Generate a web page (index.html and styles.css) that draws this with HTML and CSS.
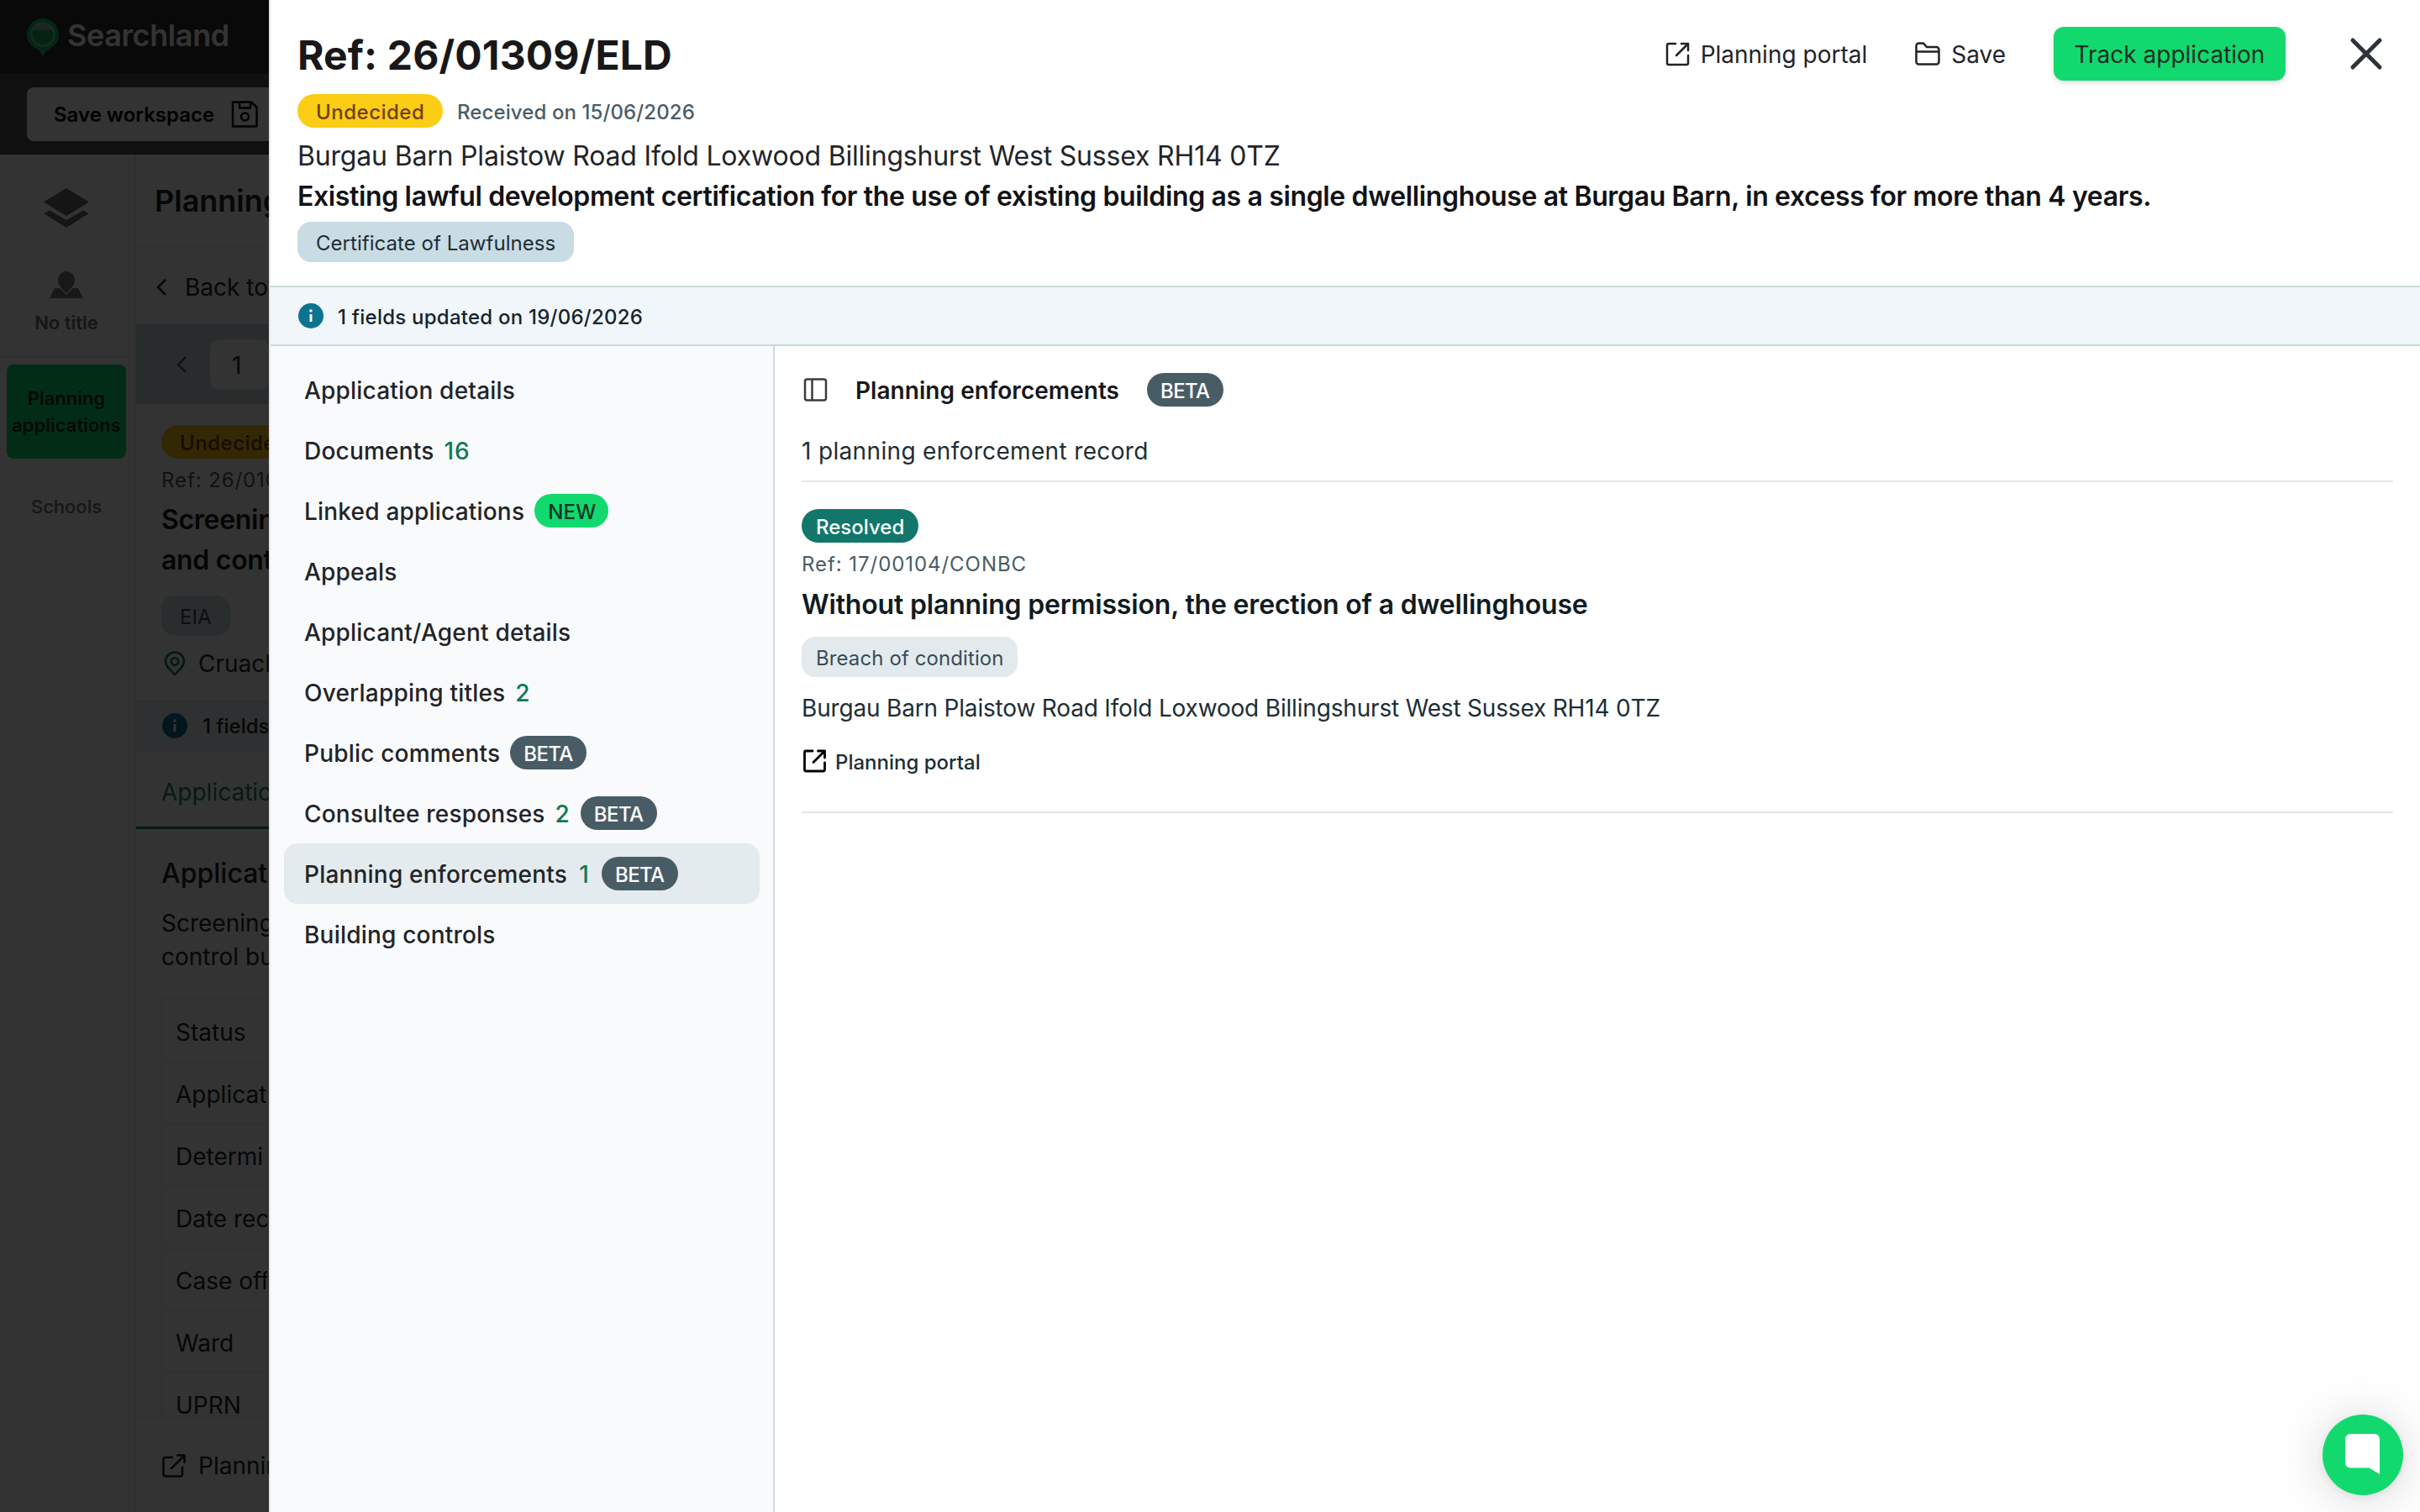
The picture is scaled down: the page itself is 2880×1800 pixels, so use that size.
FILE: index.html
```html
<!DOCTYPE html>
<html lang="en">
<head>
    <meta charset="UTF-8">
    <meta name="viewport" content="width=device-width, initial-scale=1.0">
    <title>Searchland - Planning applications</title>
    <link rel="stylesheet" href="styles.css">
</head>
<body>
    <div class="app">
        <header class="topbar">
            <svg class="logo" width="38" height="45" viewBox="0 0 38 45">
                <path d="M19 0a19 19 0 0 1 19 19c0 9-6 15-14 18.500L19 45l-5-7.500C6 34 0 28 0 19A19 19 0 0 1 19 0z" fill="#12c065"/>
                <circle cx="19" cy="19" r="13.500" fill="#12b25f"/>
                <path d="M6.500 14a13.500 13.500 0 0 1 25 0z" fill="#9ab5a8"/>
                <circle cx="19" cy="19" r="13.500" fill="none" stroke="#8fd8b0" stroke-width="2"/>
            </svg>
            <span class="brand">Searchland</span>
        </header>
        <div class="toolbar">
            <button class="save-workspace">
                Save workspace
                <svg width="32" height="32" viewBox="0 0 32 32" fill="none" stroke="#000" stroke-width="2.500" stroke-linejoin="round">
                    <path d="M2 1.500h22l6.500 6v23H2z"/>
                    <path d="M10 1.500v7h13v-7"/>
                    <circle cx="16.500" cy="19" r="4.500"/>
                </svg>
            </button>
        </div>

        <div class="workspace">
            <nav class="rail">
                <svg class="rail-layers" width="54" height="48" viewBox="0 0 54 48" fill="#6b6b6b">
                    <path d="M27 0l27 16.500L27 33 0 16.500z"/>
                    <path d="M0 30l7-3.500L27 38l20-11.500 7 3.500-27 17z"/>
                </svg>
                <svg class="rail-title" width="40" height="33" viewBox="0 0 40 33" fill="#777">
                    <path d="M20 26c-5-5-10-9-10-16a10 10 0 0 1 20 0c0 7-5 11-10 16z"/>
                    <path d="M6 20h6l8 8 8-8h6l6 12H0z"/>
                </svg>
                <span class="rail-label">No title</span>
                <div class="rail-active">Planning applications</div>
                <span class="rail-label schools">Schools</span>
            </nav>

            <section class="column">
                <h2 class="column-title">Planning</h2>
                <div class="back">
                    <svg width="12" height="20" viewBox="0 0 12 20" fill="none" stroke="#222" stroke-width="2.500"><path d="M11 1L2 10l9 9"/></svg>
                    Back to
                </div>
                <div class="pager">
                    <svg width="12" height="20" viewBox="0 0 12 20" fill="none" stroke="#4a5c66" stroke-width="2.500"><path d="M11 1L2 10l9 9"/></svg>
                    <div class="pager-input">1</div>
                </div>
                <div class="summary">
                    <span class="badge badge-undecided">Undecided</span>
                    <p class="summary-ref">Ref: 26/010</p>
                    <p class="summary-title">Screenin<br>and cont</p>
                    <span class="chip chip-light">EIA</span>
                    <p class="summary-address">
                        <svg width="26" height="30" viewBox="0 0 26 30" fill="none" stroke="#12776a" stroke-width="2.600">
                            <path d="M13 28C7 22 2 18 2 12.500a11 11 0 0 1 22 0C24 18 19 22 13 28z"/>
                            <circle cx="13" cy="12.500" r="4.200"/>
                        </svg>
                        Cruach
                    </p>
                </div>
                <div class="column-notice">
                    <svg class="info" width="30" height="30" viewBox="0 0 30 30">
                        <circle cx="15" cy="15" r="15" fill="#0b7491"/>
                        <path d="M15 13v9" stroke="#fff" stroke-width="3"/>
                        <circle cx="15" cy="9" r="1.800" fill="#fff"/>
                    </svg>
                    1 fields
                </div>
                <div class="tab">Applicatio</div>
                <h3 class="details-title">Applicat</h3>
                <p class="details-text">Screening<br>control bu</p>
                <div class="details-table">
                    <div>Status</div>
                    <div>Applicat</div>
                    <div>Determi</div>
                    <div>Date rec</div>
                    <div>Case off</div>
                    <div>Ward</div>
                    <div>UPRN</div>
                </div>
                <div class="column-footer">
                    <svg width="28" height="28" viewBox="0 0 28 28" fill="none" stroke="#222" stroke-width="2.500" stroke-linecap="round" stroke-linejoin="round">
                        <path d="M12 4H4a2.500 2.500 0 0 0-2.500 2.500V24A2.500 2.500 0 0 0 4 26.500h17.500A2.500 2.500 0 0 0 24 24v-8"/>
                        <path d="M11 17L26.500 1.500M18 1.500h8.500V10"/>
                    </svg>
                    Plannin
                </div>
            </section>
        </div>
    </div>

    <div class="overlay"></div>

    <main class="drawer">
        <header class="drawer-header">
            <div class="drawer-info">
                <h1 class="drawer-title">Ref: 26/01309/ELD</h1>
                <div class="status-row">
                    <span class="badge badge-undecided">Undecided</span>
                    <span class="received">Received on 15/06/2026</span>
                </div>
                <p class="address">Burgau Barn Plaistow Road Ifold Loxwood Billingshurst West Sussex RH14 0TZ</p>
                <p class="proposal">Existing lawful development certification for the use of existing building as a single dwellinghouse at Burgau Barn, in excess for more than 4 years.</p>
                <span class="chip chip-blue">Certificate of Lawfulness</span>
            </div>
            <div class="drawer-actions">
                <a class="action portal">
                    <svg width="30" height="30" viewBox="0 0 30 30" fill="none" stroke="#222" stroke-width="2.500" stroke-linecap="round" stroke-linejoin="round">
                        <path d="M12 3H4a2 2 0 0 0-2 2v21a2 2 0 0 0 2 2h21a2 2 0 0 0 2-2v-9"/>
                        <path d="M13 17L27 3M19 3h8v8"/>
                    </svg>
                    <span>Planning portal</span>
                </a>
                <a class="action save">
                    <svg width="30" height="28" viewBox="0 0 30 28" fill="none" stroke="#222" stroke-width="2.500" stroke-linejoin="round">
                        <path d="M1.500 23.500v-19A3 3 0 0 1 4.500 1.500h5.500l4 4.500h11.500a3 3 0 0 1 3 3v14.500a3 3 0 0 1-3 3h-21a3 3 0 0 1-3-3z"/>
                        <path d="M1.500 11.500h27"/>
                    </svg>
                    <span>Save</span>
                </a>
                <button class="track"><span>Track application</span></button>
                <svg class="close" width="40" height="40" viewBox="0 0 40 40" stroke="#2d333b" stroke-width="5" stroke-linecap="round">
                    <path d="M4 4l32 32M36 4L4 36"/>
                </svg>
            </div>
        </header>

        <div class="notice">
            <svg class="info" width="30" height="30" viewBox="0 0 30 30">
                <circle cx="15" cy="15" r="15" fill="#0b7491"/>
                <path d="M15 13v9" stroke="#fff" stroke-width="3"/>
                <circle cx="15" cy="9" r="1.800" fill="#fff"/>
            </svg>
            <span>1 fields updated on 19/06/2026</span>
        </div>

        <div class="drawer-body">
            <nav class="menu">
                <a class="menu-item"><span>Application details</span></a>
                <a class="menu-item"><span>Documents</span><span class="count">16</span></a>
                <a class="menu-item"><span>Linked applications</span><b class="badge badge-new">NEW</b></a>
                <a class="menu-item"><span>Appeals</span></a>
                <a class="menu-item"><span>Applicant/Agent details</span></a>
                <a class="menu-item"><span>Overlapping titles</span><span class="count">2</span></a>
                <a class="menu-item"><span>Public comments</span><b class="badge badge-beta">BETA</b></a>
                <a class="menu-item"><span>Consultee responses</span><span class="count">2</span><b class="badge badge-beta">BETA</b></a>
                <a class="menu-item active"><span>Planning enforcements</span><span class="count">1</span><b class="badge badge-beta">BETA</b></a>
                <a class="menu-item"><span>Building controls</span></a>
            </nav>

            <section class="content">
                <div class="content-header">
                    <svg width="32" height="32" viewBox="0 0 32 32" fill="none" stroke="#3c3c40" stroke-width="2.500">
                        <rect x="4" y="3.500" width="25" height="25" rx="2.500"/>
                        <path d="M12.500 3.500v25"/>
                    </svg>
                    <h2>Planning enforcements</h2>
                    <b class="badge badge-beta">BETA</b>
                </div>
                <p class="record-count">1 planning enforcement record</p>
                <article class="record">
                    <span class="badge badge-resolved">Resolved</span>
                    <p class="record-ref">Ref: 17/00104/CONBC</p>
                    <h3 class="record-title">Without planning permission, the erection of a dwellinghouse</h3>
                    <span class="chip chip-light">Breach of condition</span>
                    <p class="record-address">Burgau Barn Plaistow Road Ifold Loxwood Billingshurst West Sussex RH14 0TZ</p>
                    <a class="record-link">
                        <svg width="32" height="32" viewBox="0 0 32 32" fill="none" stroke="#000" stroke-width="2.800" stroke-linecap="round" stroke-linejoin="round">
                            <path d="M13 4H5a1.500 1.500 0 0 0-1.500 1.500v21A1.500 1.500 0 0 0 5 28h21a1.500 1.500 0 0 0 1.500-1.500V18"/>
                            <path d="M14 17.500L27.500 4M19.500 4h8v8"/>
                        </svg>
                        <span>Planning portal</span>
                    </a>
                </article>
            </section>
        </div>
    </main>

    <button class="chat">
        <svg width="42" height="50" viewBox="0 0 42 50" fill="#fff">
            <path d="M6 0h29a6 6 0 0 1 6 6v42l-12.500-7.500H6a6 6 0 0 1-6-6V6a6 6 0 0 1 6-6z"/>
        </svg>
    </button>
</body>
</html>
```
FILE: styles.css
```css
* {
    box-sizing: border-box;
}
body {
    margin: 0;
    height: 1800px;
    overflow: hidden;
    font-family: "Inter", "Liberation Sans", sans-serif;
    font-size: 28px;
    color: #222428;
    background: #fff;
}
h1, h2, h3, p {
    margin: 0;
}
button {
    border: none;
    font-family: inherit;
}
svg {
    flex: none;
}

/* page behind the drawer */
.app {
    display: flex;
    flex-direction: column;
    width: 320px;
    height: 1800px;
    overflow: hidden;
}
.topbar {
    display: flex;
    flex: none;
    height: 88px;
    padding: 22px 32px;
    gap: 10px;
    background: #303030;
}
.brand {
    font-size: 36px;
    font-weight: 600;
    letter-spacing: -0.4px;
    line-height: 40px;
    color: #fff;
}
.toolbar {
    flex: none;
    height: 96px;
    padding: 16px 0 16px 32px;
    background: #505050;
}
.save-workspace {
    display: flex;
    align-items: center;
    gap: 20px;
    width: 400px;
    height: 64px;
    padding: 0 32px;
    border-radius: 8px;
    background: #fff;
    font-size: 24px;
    font-weight: 600;
    color: #000;
}
.workspace {
    display: flex;
    flex: 1;
    min-height: 0;
}
.rail {
    display: flex;
    flex-direction: column;
    align-items: center;
    flex: none;
    width: 162px;
    padding: 40px 2px 0 0;
    border-right: 2px solid #e4e8ea;
}
.rail-title {
    margin-top: 51px;
}
.rail-label {
    width: 158px;
    height: 70px;
    padding-top: 11px;
    border-bottom: 2px solid #eee;
    font-size: 22px;
    font-weight: 600;
    line-height: 34px;
    text-align: center;
    color: #6e6e6e;
}
.rail-active {
    width: 142px;
    height: 112px;
    margin-top: 8px;
    padding: 24px 4px;
    border-radius: 8px;
    background: #12d96e;
    font-size: 22px;
    font-weight: 600;
    line-height: 32px;
    text-align: center;
    color: #0c3320;
}
.schools {
    margin-top: 29px;
    border: none;
    font-weight: 500;
}
.column {
    display: flex;
    flex-direction: column;
    flex: none;
    width: 158px;
    overflow: hidden;
    white-space: nowrap;
}
.column-title {
    flex: none;
    height: 110px;
    padding-left: 22px;
    border-bottom: 2px solid #eee;
    font-size: 36px;
    font-weight: 600;
    line-height: 111px;
}
.back {
    display: flex;
    align-items: center;
    flex: none;
    gap: 22px;
    height: 92px;
    padding: 4px 0 0 24px;
}
.pager {
    display: flex;
    align-items: center;
    flex: none;
    gap: 28px;
    height: 95px;
    padding-left: 48px;
    background: #c9dce2;
}
.pager-input {
    width: 120px;
    height: 60px;
    padding-left: 26px;
    border-radius: 12px;
    background: #fff;
    line-height: 62px;
}
.summary {
    flex: none;
    height: 354px;
    padding: 25px 0 0 30px;
    border-bottom: 2px solid #e0e6ea;
}
.summary-ref {
    margin-top: 4px;
    font-size: 24px;
    letter-spacing: 0.9px;
    line-height: 43px;
    color: #4a5c66;
}
.summary-title {
    margin: 0 0 18px;
    padding-top: 2px;
    font-size: 32px;
    font-weight: 600;
    letter-spacing: -0.3px;
    line-height: 48px;
    color: #101c22;
}
.summary-address {
    display: flex;
    align-items: center;
    gap: 15px;
    height: 66px;
    padding-left: 3px;
    color: #1c2e36;
}
.column-notice {
    display: flex;
    align-items: center;
    flex: none;
    gap: 18px;
    height: 60px;
    padding-left: 31px;
    border-bottom: 2px solid #e0e6ea;
    background: #e9eff6;
    font-size: 24px;
    font-weight: 500;
}
.tab {
    flex: none;
    height: 92px;
    padding-left: 30px;
    border-bottom: 3px solid #12876a;
    line-height: 96px;
    color: #12876a;
}
.details-title {
    padding: 29px 0 0 30px;
    font-size: 32px;
    font-weight: 500;
    line-height: 48px;
}
.details-text {
    padding: 15px 0 0 30px;
    line-height: 40px;
}
.details-table {
    flex: none;
    height: 496px;
    margin: 30px 0 0 30px;
    overflow: hidden;
    border: 2px solid #eee;
    border-bottom: none;
}
.details-table div {
    height: 74px;
    padding: 3px 0 0 15px;
    border-bottom: 2px solid #eee;
    line-height: 70px;
}
.column-footer {
    display: flex;
    align-items: center;
    gap: 15px;
    height: 114px;
    padding: 3px 0 0 31px;
    border-top: 2px solid #eee;
}
.overlay {
    position: fixed;
    inset: 0;
    background: rgba(0, 0, 0, 0.8);
}

/* badges and chips */
.badge {
    display: inline-block;
    flex: none;
    height: 40px;
    padding: 2px 17px 0;
    border-radius: 20px;
    font-size: 24px;
    font-weight: 500;
    line-height: 40px;
    vertical-align: top;
}
.badge-undecided {
    width: 173px;
    padding: 2px 0 0 22px;
    letter-spacing: 0.5px;
    background: #fbcd14;
    color: #713f12;
}
.badge-new {
    width: 88px;
    padding: 2px 0 0 16px;
    background: #12d96e;
    color: #10362c;
}
.badge-beta {
    width: 91px;
    padding: 2px 0 0 16px;
    letter-spacing: -0.6px;
    background: #485c66;
    color: #fff;
}
.badge-resolved {
    width: 139px;
    background: #12776a;
    color: #fff;
}
.chip {
    display: block;
    width: max-content;
    height: 48px;
    padding: 2px 22px 0;
    border-radius: 16px;
    font-size: 24px;
    line-height: 48px;
}
.chip-blue {
    letter-spacing: 0.04px;
    background: #c9dce4;
    color: #1c2e36;
}
.chip-light {
    padding: 2px 16px 0 17px;
    letter-spacing: 0.1px;
    background: #e2eaee;
    color: #3a4c56;
}
.summary .chip-light {
    padding: 2px 22px 0;
    background: #cfe0e6;
}

/* drawer */
.drawer {
    position: fixed;
    top: 0;
    right: 0;
    bottom: 0;
    left: 320px;
    display: flex;
    flex-direction: column;
    border-left: 2px solid #e5e7eb;
    background: #fff;
}
.drawer-header {
    display: flex;
    justify-content: space-between;
    flex: none;
    height: 342px;
    padding: 32px 44px 0 32px;
    border-bottom: 2px solid #c9dcdc;
}
.drawer-info {
    width: 0;
    white-space: nowrap;
}
.drawer-title {
    height: 80px;
    font-size: 48px;
    font-weight: 700;
    letter-spacing: 0.15px;
    line-height: 67px;
    color: #18181a;
}
.status-row {
    display: flex;
    gap: 17px;
    height: 49px;
}
.received {
    font-size: 24px;
    font-weight: 500;
    letter-spacing: 0.1px;
    line-height: 43px;
    color: #4a5c66;
}
.address {
    font-size: 32px;
    letter-spacing: -0.18px;
    line-height: 49px;
}
.proposal {
    margin-bottom: 7px;
    font-size: 32px;
    font-weight: 600;
    letter-spacing: -0.36px;
    line-height: 47px;
    color: #121214;
}
.drawer-actions {
    display: flex;
    align-items: center;
    height: 64px;
}
.action {
    display: flex;
    align-items: center;
}
.action span, .track span {
    padding-top: 2px;
}
.portal {
    gap: 12px;
    margin-right: 57px;
}
.save {
    gap: 13px;
    margin-right: 57px;
}
.track {
    display: flex;
    align-items: center;
    justify-content: center;
    width: 276px;
    height: 64px;
    margin-right: 76px;
    padding: 0;
    border-radius: 12px;
    background: #12d96e;
    box-shadow: 0 2px 6px rgba(0, 0, 0, 0.15);
    font-size: 28px;
    color: #1c2e26;
}
.notice {
    display: flex;
    align-items: center;
    flex: none;
    gap: 17px;
    height: 70px;
    padding: 0 33px;
    border-bottom: 2px solid #c9dcdc;
    background: #f0f6fa;
    font-size: 24px;
    font-weight: 500;
    letter-spacing: 0.24px;
    color: #16242c;
}
.notice span {
    padding-top: 2px;
}
.drawer-body {
    display: flex;
    flex: 1;
}
.menu {
    flex: none;
    width: 600px;
    padding: 16px;
    border-right: 2px solid #c9dce2;
    background: #f8fafc;
}
.menu-item {
    display: flex;
    align-items: center;
    gap: 12px;
    height: 72px;
    padding-left: 24px;
    border-radius: 16px;
    font-weight: 500;
    letter-spacing: 0.2px;
}
.menu-item span {
    padding-top: 2px;
}
.menu-item.active {
    background: #e3ebee;
}
.menu-item .count {
    min-width: 17px;
    letter-spacing: 1px;
    text-align: center;
    color: #0f7a55;
}
.content {
    flex: 1;
    padding: 32px 32px 0;
    color: #1c2e36;
}
.content-header {
    display: flex;
    align-items: center;
    height: 40px;
}
.content-header h2 {
    margin: 0 33px 0 32px;
    padding-top: 2px;
    font-size: 28px;
    font-weight: 600;
    letter-spacing: 0.05px;
    color: #18181a;
}
.record-count {
    height: 90px;
    padding-top: 33px;
    border-bottom: 2px solid #e4e6e6;
    letter-spacing: 0.34px;
    line-height: 40px;
}
.record {
    height: 394px;
    padding-top: 32px;
    border-bottom: 2px solid #e4e6e6;
}
.record-ref {
    margin-top: 4px;
    font-size: 24px;
    letter-spacing: 0.94px;
    line-height: 43px;
    color: #4a5c66;
}
.record-title {
    height: 65px;
    padding-top: 3px;
    font-size: 32px;
    font-weight: 600;
    letter-spacing: -0.18px;
    line-height: 48px;
    color: #101c22;
}
.record-address {
    height: 80px;
    padding-top: 15px;
    letter-spacing: -0.18px;
    line-height: 44px;
}
.record-link {
    display: flex;
    align-items: center;
    gap: 8px;
    height: 40px;
    font-size: 24px;
    font-weight: 500;
}
.record-link span {
    padding-top: 3px;
}

.chat {
    position: fixed;
    right: 20px;
    bottom: 20px;
    width: 96px;
    height: 96px;
    padding: 3px 0 0 27px;
    border-radius: 50%;
    background: #12d96e;
    box-shadow: 0 2px 12px rgba(0, 0, 0, 0.08), 0 4px 60px rgba(0, 0, 0, 0.16);
    text-align: left;
}
```
